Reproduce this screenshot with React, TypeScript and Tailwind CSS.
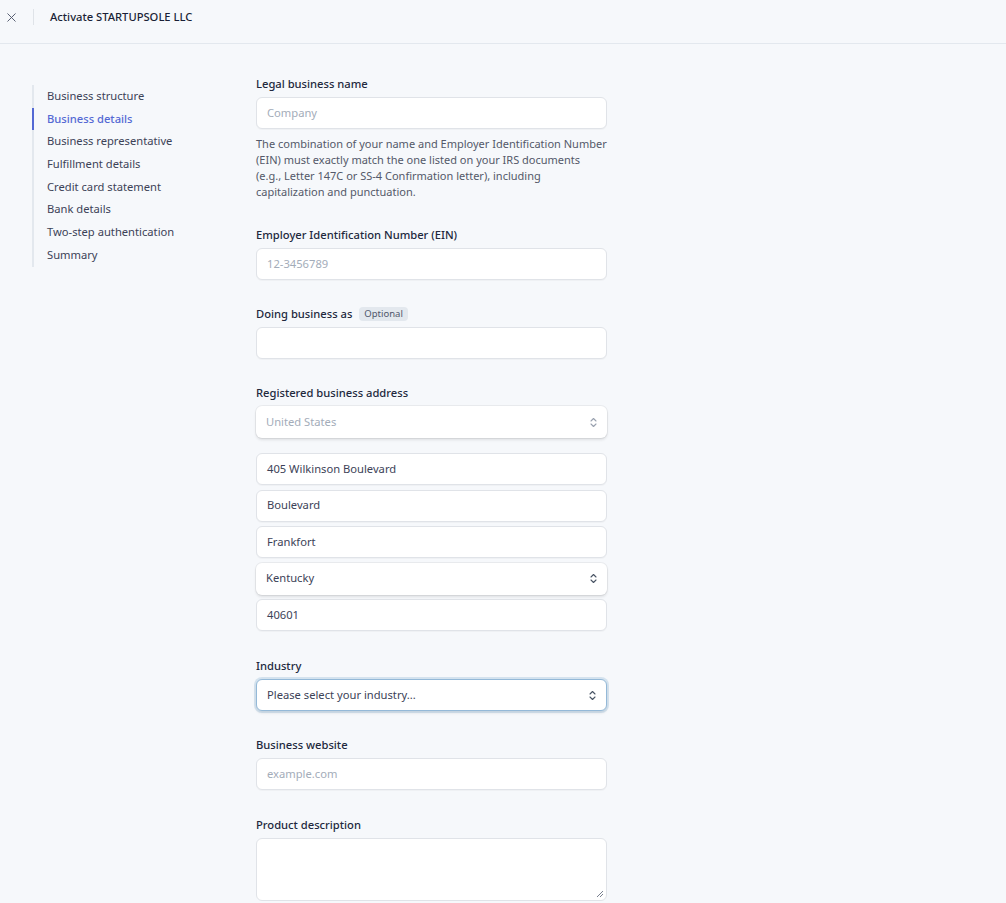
import { X } from "lucide-react";

const steps = [
  "Business structure",
  "Business details",
  "Business representative",
  "Fulfillment details",
  "Credit card statement",
  "Bank details",
  "Two-step authentication",
  "Summary",
];

function Chevrons({ muted }: { muted?: boolean }) {
  return (
    <svg width="7" height="11" viewBox="0 0 7 11" className={muted ? "text-gray-400" : "text-gray-600"}>
      <path d="M1 4 L3.5 1.5 L6 4 M1 7 L3.5 9.5 L6 7" fill="none" stroke="currentColor" strokeWidth="1.1" strokeLinecap="round" strokeLinejoin="round" />
    </svg>
  );
}

function Input({ value, placeholder }: { value?: string; placeholder?: string }) {
  return (
    <div className="flex h-8 items-center rounded-md border border-[#e0e3e8] bg-white px-[10px] text-[11.2px] shadow-[0_1px_1px_rgba(0,0,0,0.03)]">
      {value ? <span className="text-[#3c4257]">{value}</span> : <span className="text-[#a3acb9]">{placeholder}</span>}
    </div>
  );
}

function Select({ value, muted, focus }: { value: string; muted?: boolean; focus?: boolean }) {
  return (
    <div
      className={`flex h-8 items-center justify-between rounded-md bg-white px-[10px] text-[11.2px] ${
        focus
          ? "border border-[#94b9d8] shadow-[0_0_0_2px_rgba(148,185,216,0.35),0_2px_3px_rgba(0,0,0,0.1)]"
          : "shadow-[0_0_0_1px_rgba(0,0,0,0.05),0_2px_3px_rgba(0,0,0,0.1)]"
      }`}
    >
      <span className={muted ? "text-[#a3acb9]" : "text-[#3c4257]"}>{value}</span>
      <Chevrons muted={muted} />
    </div>
  );
}

function Label({ children, className = "" }: { children: React.ReactNode; className?: string }) {
  return (
    <div className={`mb-[5px] flex h-4 items-center gap-[7px] text-[11.2px] font-medium leading-4 text-[#22283d] ${className}`}>
      {children}
    </div>
  );
}

export default function App() {
  return (
    <div
      className="min-h-screen bg-[#f6f8fb] text-[#3c4257]"
      style={{ fontFamily: '"Noto Sans", "Open Sans", Arial, sans-serif' }}
    >
      <header className="flex h-[44px] items-start border-b border-[#e3e8ee] pt-[9px]">
        <div className="flex h-4 w-[22px] items-center justify-center">
          <X size={15} strokeWidth={1.5} className="text-[#4f566b]" />
        </div>
        <div className="ml-[11px] h-4 w-px bg-[#dfe3e8]" />
        <div className="pl-[16px] text-[11.2px] font-medium leading-4 text-[#1a1f36]">Activate STARTUPSOLE LLC</div>
      </header>

      <div className="flex">
        <aside className="w-[256px] shrink-0 pl-[32px] pt-[41px]">
          <nav className="border-l-2 border-[#e3e8ee]">
            {steps.map((s) => {
              const active = s === "Business details";
              return (
                <div
                  key={s}
                  className={`-ml-[2px] flex h-[22.7px] items-center border-l-2 pl-[13px] text-[11.2px] ${
                    active ? "border-[#5469d4] font-medium text-[#5469d4]" : "border-transparent text-[#3c4257]"
                  }`}
                >
                  {s}
                </div>
              );
            })}
          </nav>
        </aside>

        <main className="w-[351px] pt-[32px]">
          <Label>Legal business name</Label>
          <Input placeholder="Company" />
          <p className="mt-[7px] w-[370px] text-[11px] leading-[16px] text-[#545969]">
            The combination of your name and Employer Identification Number
            <br />
            (EIN) must exactly match the one listed on your IRS documents
            <br />
            (e.g., Letter 147C or SS-4 Confirmation letter), including
            <br />
            capitalization and punctuation.
          </p>

          <Label className="mt-[27px]">Employer Identification Number (EIN)</Label>
          <Input placeholder="12-3456789" />

          <Label className="mt-[26px]">
            Doing business as
            <span className="rounded-[4px] bg-[#e3e8ee] px-[5px] text-[9.5px] font-normal leading-[14px] text-[#4f566b]">Optional</span>
          </Label>
          <Input />

          <Label className="mt-[26px]">Registered business address</Label>
          <Select value="United States" muted />
          <div className="mt-[15px] flex flex-col gap-[4.5px]">
            <Input value="405 Wilkinson Boulevard" />
            <Input value="Boulevard" />
            <Input value="Frankfort" />
            <Select value="Kentucky" />
            <Input value="40601" />
          </div>

          <Label className="mt-[27px]">Industry</Label>
          <Select value="Please select your industry..." focus />

          <Label className="mt-[26px]">Business website</Label>
          <Input placeholder="example.com" />

          <Label className="mt-[27px]">Product description</Label>
          <div className="relative h-[63px] rounded-md border border-[#e0e3e8] bg-white">
            <svg width="8" height="8" viewBox="0 0 8 8" className="absolute bottom-[2px] right-[2px] text-gray-500">
              <path d="M7 1 L1 7 M7 4 L4 7" stroke="currentColor" strokeWidth="0.9" />
            </svg>
          </div>
        </main>
      </div>
    </div>
  );
}
